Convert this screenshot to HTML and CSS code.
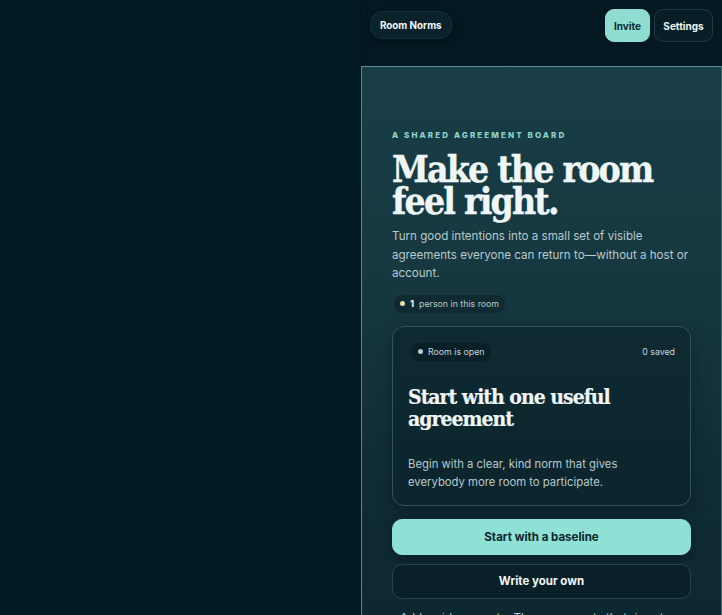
FILE: index.html
```html
<!DOCTYPE html>
<html lang="en">
<head>
<meta charset="utf-8">
<title>Room Norms</title>
<link rel="stylesheet" href="styles.css">
</head>
<body>
<div class="page">
  <div class="side"></div>
  <main class="main">
    <header class="topbar">
      <span class="brand">Room Norms</span>
      <nav class="actions">
        <button class="btn-invite">Invite</button>
        <button class="btn-settings">Settings</button>
      </nav>
    </header>
    <section class="hero">
      <p class="eyebrow">A SHARED AGREEMENT BOARD</p>
      <h1 class="title">Make the room feel right.</h1>
      <p class="lead">Turn good intentions into a small set of visible agreements everyone can return to—without a host or account.</p>
      <div class="presence"><span class="dot dot-warm"></span><b>1</b><span>person in this room</span></div>
      <div class="panel">
        <div class="panel-top">
          <span class="status"><span class="dot"></span>Room is open</span>
          <span class="saved">0 saved</span>
        </div>
        <h2 class="panel-title">Start with one useful agreement</h2>
        <p class="panel-text">Begin with a clear, kind norm that gives everybody more room to participate.</p>
      </div>
      <button class="btn-primary">Start with a baseline</button>
      <button class="btn-secondary">Write your own</button>
      <p class="foot">Add an idea or vote. The agreements that rise stay visible for everyone.</p>
    </section>
  </main>
</div>
</body>
</html>
```

FILE: styles.css
```css
* { box-sizing: border-box; }
html, body { margin: 0; padding: 0; }
body {
  background: #021a25;
  color: #eef6f6;
  font-family: Inter, "Noto Sans", "Liberation Sans", sans-serif;
  height: 615px;
  overflow: hidden;
}
.page {
  display: grid;
  grid-template-columns: 361px 361px;
  height: 615px;
}
.side { background: #021a25; border-right: 1px solid #01141c; }
.main {
  background: #031820;
  display: flex;
  flex-direction: column;
}
.topbar {
  height: 66px;
  display: flex;
  align-items: flex-start;
  justify-content: space-between;
  padding: 9px 9px 0 9px;
}
.brand {
  margin-top: 2px;
  height: 28px;
  padding: 0 9px;
  display: inline-flex;
  align-items: center;
  border-radius: 12px;
  background: #0a222c;
  border: 1px solid #12303a;
  font-size: 9.8px;
  font-weight: 700;
  color: #f2f7f7;
  box-shadow: 0 2px 6px rgba(0,0,0,0.35);
}
.actions { display: flex; gap: 4px; }
.actions button {
  height: 33px;
  border-radius: 9px;
  font-family: inherit;
  font-size: 10px;
  font-weight: 700;
  padding: 0 6px;
}
.btn-invite {
  background: #8fdcd1;
  color: #0b2a30;
  border: 1px solid #8fdcd1;
  width: 45px;
}
.btn-settings {
  background: #071e27;
  color: #eef6f6;
  border: 1px solid #1b3a43;
  width: 59px;
}
.hero {
  flex: 1;
  border-top: 1px solid #5d8d93;
  border-left: 1px solid #5d8d93;
  border-right: 1px solid #3d6a70;
  background: linear-gradient(180deg, #183e48 0%, #16373f 40%, #0f2b34 75%, #0d2730 100%);
  padding: 63px 30px 0 30px;
  display: flex;
  flex-direction: column;
}
.eyebrow {
  margin: 0;
  font-size: 8px;
  font-weight: 800;
  letter-spacing: 2.1px;
  color: #8fd3c9;
}
.title {
  margin: 13px 0 0 0;
  font-family: "DejaVu Serif", "Liberation Serif", serif;
  font-stretch: condensed;
  font-weight: 700;
  font-size: 37px;
  line-height: 32px;
  letter-spacing: -1.8px;
  -webkit-text-stroke: 0.4px #eef6f8;
  color: #eef6f8;
  width: 290px;
}
.lead {
  margin: 10px 0 0 0;
  font-size: 11.6px;
  line-height: 18.5px;
  color: #b7cacd;
  width: 298px;
}
.presence {
  margin-top: 12px;
  align-self: flex-start;
  display: inline-flex;
  align-items: center;
  gap: 5px;
  height: 18px;
  padding: 0 6px;
  margin-left: 2px;
  border-radius: 8px;
  background: rgba(6, 28, 36, 0.45);
  font-size: 8.8px;
  color: #b7cacd;
}
.presence b { color: #f2f7f7; font-size: 9.5px; }
.dot {
  width: 5px; height: 5px; border-radius: 50%;
  background: #b7cacd;
  display: inline-block;
}
.dot-warm { background: #e8dfae; }
.panel {
  margin-top: 13px;
  border: 1px solid #2f545c;
  border-radius: 12px;
  background: rgba(10, 32, 40, 0.55);
  padding: 16px 15px 17px 15px;
  height: 180px;
  box-shadow: 0 6px 18px rgba(0,0,0,0.25);
}
.panel-top {
  display: flex;
  justify-content: space-between;
  align-items: center;
}
.status {
  display: inline-flex;
  align-items: center;
  gap: 5px;
  height: 18px;
  padding: 0 6px;
  border-radius: 8px;
  background: rgba(6, 26, 34, 0.55);
  font-size: 8.8px;
  color: #c6d6d8;
  margin-left: 4px;
}
.saved { font-size: 8.8px; color: #c6d6d8; margin-right: 0; }
.panel-title {
  margin: 25px 0 0 0;
  font-family: "DejaVu Serif", "Liberation Serif", serif;
  font-stretch: condensed;
  font-weight: 700;
  font-size: 21px;
  line-height: 22px;
  letter-spacing: -1px;
  -webkit-text-stroke: 0.2px #eef6f8;
  color: #eef6f8;
}
.panel-text {
  margin: 25px 0 0 0;
  font-size: 11.3px;
  line-height: 18px;
  color: #b7cacd;
}
.btn-primary, .btn-secondary {
  width: 100%;
  font-family: inherit;
  font-size: 11.5px;
  font-weight: 700;
  border-radius: 10px;
}
.btn-primary {
  margin-top: 13px;
  height: 36px;
  background: #8fe0d5;
  color: #0b262c;
  border: 1px solid #8fe0d5;
  box-shadow: 0 4px 12px rgba(0,0,0,0.3);
}
.btn-secondary {
  margin-top: 9px;
  height: 35px;
  background: #0a2029;
  color: #f2f7f7;
  border: 1px solid #24444c;
}
.foot {
  margin: 10px 0 0 0;
  font-size: 11.6px;
  line-height: 18px;
  color: #b7cacd;
  padding-left: 8px;
}
```
